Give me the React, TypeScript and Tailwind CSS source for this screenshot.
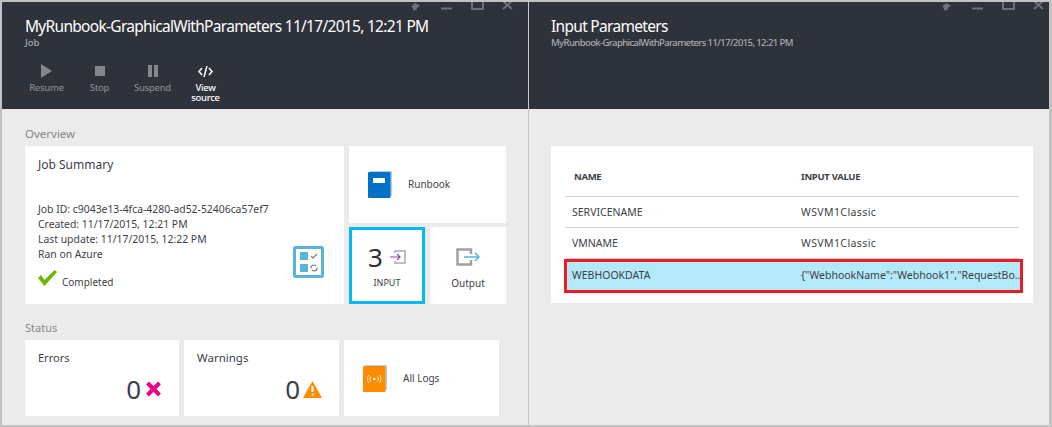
import React from 'react';

const font = { fontFamily: '"Noto Sans", "Open Sans", sans-serif' };

const WindowIcons = ({ className }: { className: string }) => (
  <svg className={className} width="110" height="12" viewBox="0 0 110 12" fill="none">
    <path d="M4 10L8 6.500 6.500 4 10 1l5 2.500-3 2.500-.5 2-3 .5-1-1.500-2.500 2z" fill="#6b6f76" />
    <path d="M36 6.500h11" stroke="#6b6f76" strokeWidth="2" />
    <path d="M67 -2h11v9h-11z" stroke="#6b6f76" strokeWidth="2" />
    <path d="M98 -1l9 8M107 -1l-9 8" stroke="#6b6f76" strokeWidth="2" />
  </svg>
);

const Command = ({ icon, label, active }: { icon: React.ReactNode; label: string; active?: boolean }) => (
  <div className={`w-[53px] flex flex-col items-center ${active ? 'text-white' : 'text-[#84878c]'}`}>
    <div className="h-[16px] flex items-center justify-center">{icon}</div>
    <div className="mt-[4px] max-w-[40px] text-[9.500px] leading-[10px] tracking-[-0.3px] font-medium text-center">{label}</div>
  </div>
);

const BookIcon = ({ color, children }: { color: string; children: React.ReactNode }) => (
  <svg width="25" height="27" viewBox="0 0 25 27">
    <path d="M2 0h22v25h-2z" fill="#a9c8e4" opacity="0.9" />
    <rect x="0" y="1" width="22.500" height="26" rx="1" fill={color} />
    {children}
  </svg>
);

const Tile = ({ className, children }: { className: string; children: React.ReactNode }) => (
  <div className={`bg-white ${className}`}>{children}</div>
);

const Row = ({ name, value }: { name: string; value: string }) => (
  <div className="h-[31px] flex items-center pt-[1px] border-b border-[#cfcfcf] text-[10.500px] text-[#3c3f47]">
    <div className="w-[235px] shrink-0 pl-[6px]">{name}</div>
    <div className="text-[10.500px] tracking-[0.4px]">{value}</div>
  </div>
);

export default function App() {
  return (
    <div className="w-[1052px] h-[427px] overflow-hidden flex bg-[#ebebeb] border-t-2 border-l-2 border-b-2 border-r-[3px] border-[#c2c2c2] text-[#3c3f47]" style={font}>
      {/* Left blade */}
      <div className="w-[527px] shrink-0 flex flex-col border-r border-[#c8c8c8]">
        <div className="relative h-[107px] bg-[#2e323b] pl-[23px] pt-[12px]">
          <WindowIcons className="absolute top-0 right-[13px]" />
          <div className="text-[15.500px] leading-[24px] tracking-[-0.7px] text-white whitespace-nowrap">MyRunbook-GraphicalWithParameters 11/17/2015, 12:21 PM</div>
          <div className="text-[9.500px] leading-[12px] -mt-[1px] font-medium text-[#a8abb0]">Job</div>
          <div className="flex -ml-[5px] mt-[14px]">
            <Command label="Resume" icon={<svg width="11" height="14" viewBox="0 0 11 14"><path d="M0 0l11 7-11 7z" fill="#84878c" /></svg>} />
            <Command label="Stop" icon={<svg width="10" height="10" viewBox="0 0 10 10"><rect width="10" height="10" fill="#84878c" /></svg>} />
            <Command label="Suspend" icon={<svg width="10" height="12" viewBox="0 0 10 12"><path d="M0 0h4v12H0zM6 0h4v12H6z" fill="#84878c" /></svg>} />
            <Command active label="View source" icon={<svg width="15" height="11" viewBox="0 0 15 11" fill="none" stroke="#fff" strokeWidth="1.500"><path d="M4 2L1 5.500 4 9M11 2l3 3.500L11 9M9 0L6 11" /></svg>} />
          </div>
        </div>

        <div className="flex-1 pl-[23px] pt-[17px]">
          <div className="text-[11.500px] leading-[16px] text-[#85888d]">Overview</div>
          <div className="flex gap-[5px] mt-[4px]">
            <Tile className="relative w-[319px] h-[158px] pl-[13px] pt-[10px]">
              <div className="text-[12px] leading-[17px]">Job Summary</div>
              <div className="mt-[29px] text-[10.400px] leading-[15px]">
                <div>Job ID: c9043e13-4fca-4280-ad52-52406ca57ef7</div>
                <div>Created: 11/17/2015, 12:21 PM</div>
                <div>Last update: 11/17/2015, 12:22 PM</div>
                <div>Ran on Azure</div>
              </div>
              <div className="flex items-end mt-[8px]">
                <svg className="mb-[3px]" width="19" height="16" viewBox="0 0 19 16"><path d="M0 8l3-3 3.500 5L16.500 0 19 2 6.500 16z" fill="#6bb700" /></svg>
                <span className="ml-[5px] text-[10px] leading-[14px]">Completed</span>
              </div>
              <svg className="absolute left-[268px] top-[100px]" width="31" height="32" viewBox="0 0 31 32">
                <rect x="1.500" y="1.500" width="28" height="29" rx="1" fill="#fff" stroke="#59b4d9" strokeWidth="3" />
                <rect x="7" y="6" width="8" height="8" fill="#59b4d9" />
                <rect x="7" y="18" width="8" height="8" fill="#59b4d9" />
                <path d="M18 10l2 2 4-4" fill="none" stroke="#7a7a7a" strokeWidth="1.200" />
                <circle cx="21" cy="22" r="3" fill="none" stroke="#7a7a7a" strokeWidth="1.200" strokeDasharray="7 2" />
              </svg>
            </Tile>
            <div className="flex flex-col gap-[4px]">
              <Tile className="w-[157px] h-[77px] flex items-center pl-[19px]">
                <BookIcon color="#0072c6"><rect x="5" y="7" width="12" height="5" fill="#fff" rx="0.500" /></BookIcon>
                <span className="ml-[15px] text-[10px]">Runbook</span>
              </Tile>
              <div className="flex gap-[5px]">
                <div className="w-[76px] h-[77px] bg-white border-[3px] border-[#00bcf2] flex flex-col items-center pt-[10px]">
                  <div className="flex items-center">
                    <span className="text-[26px] leading-[34px] text-[#2c2f36]">3</span>
                    <svg className="ml-[7px]" width="16" height="14" viewBox="0 0 16 14" fill="none">
                      <path d="M5 3V1h10v12H5v-2" stroke="#a8a8a8" strokeWidth="1.500" />
                      <path d="M0 7h10M7 4l3 3-3 3" stroke="#8a44a8" strokeWidth="1.200" />
                    </svg>
                  </div>
                  <div className="text-[9px] leading-[12px] mt-[3px]">INPUT</div>
                </div>
                <Tile className="w-[76px] h-[77px] flex flex-col items-center pt-[21px]">
                  <svg width="24" height="18" viewBox="0 0 24 18" fill="none">
                    <path d="M15 6V1.500H1.500v15H15V12" stroke="#a0a0a0" strokeWidth="2.500" />
                    <path d="M8 9h15M19 5l4 4-4 4" stroke="#59b4d9" strokeWidth="1.500" />
                  </svg>
                  <div className="text-[10px] leading-[14px] mt-[10px]">Output</div>
                </Tile>
              </div>
            </div>
          </div>

          <div className="text-[11px] leading-[16px] text-[#85888d] mt-[16px]">Status</div>
          <div className="flex gap-[5px] mt-[4px]">
            <Tile className="w-[154px] h-[76px] pl-[13px] pt-[9px] flex flex-col">
              <div className="text-[11px] leading-[18px]">Errors</div>
              <div className="flex items-center justify-end pr-[17px] mt-[5px]">
                <span className="text-[26px] leading-[34px]">0</span>
                <svg className="ml-[4px]" width="17" height="16" viewBox="0 0 17 16"><path d="M2.500 2l12 12M14.500 2l-12 12" stroke="#ec008c" strokeWidth="4" /></svg>
              </div>
            </Tile>
            <Tile className="w-[155px] h-[76px] pl-[13px] pt-[9px] flex flex-col">
              <div className="text-[11.500px] leading-[18px]">Warnings</div>
              <div className="flex items-center justify-end pr-[17px] mt-[5px]">
                <span className="text-[26px] leading-[34px]">0</span>
                <svg className="ml-[3px]" width="19" height="17" viewBox="0 0 19 17">
                  <path d="M9.500 0L19 17H0z" fill="#ff8c00" />
                  <path d="M8.500 5h2v6h-2zM8.500 12.500h2v2h-2z" fill="#fff" />
                </svg>
              </div>
            </Tile>
            <Tile className="w-[155px] h-[76px] flex items-center pl-[19px]">
              <BookIcon color="#ff8c00">
                <path d="M8 11.500a3.500 3.500 0 0 0 0 5M14.400 11.500a3.500 3.500 0 0 1 0 5M6 10a6 6 0 0 0 0 8M16.400 10a6 6 0 0 1 0 8" fill="none" stroke="#fff" strokeWidth="0.800" />
                <circle cx="11.200" cy="14" r="1.300" fill="#fff" />
              </BookIcon>
              <span className="ml-[15px] text-[10px]">All Logs</span>
            </Tile>
          </div>
        </div>
      </div>

      {/* Right blade */}
      <div className="flex-1 flex flex-col">
        <div className="relative h-[107px] bg-[#2e323b] pl-[22px] pt-[12px]">
          <WindowIcons className="absolute top-0 right-[3px]" />
          <div className="text-[15.500px] leading-[24px] tracking-[-0.7px] text-white">Input Parameters</div>
          <div className="text-[9.500px] leading-[12px] -mt-[1px] tracking-[-0.6px] font-medium text-[#a8abb0]">MyRunbook-GraphicalWithParameters 11/17/2015, 12:21 PM</div>
        </div>
        <div className="flex-1 pl-[22px] pt-[37px]">
          <div className="w-[482px] h-[157px] bg-white pl-[15px] pt-[21px]">
            <div className="w-[453px] h-[30px] flex items-start border-b border-[#cfcfcf] text-[9.500px] leading-[20px] tracking-[-0.3px] font-bold text-[#3c3f47]">
              <div className="w-[235px] shrink-0 pl-[8px]">NAME</div>
              <div>INPUT VALUE</div>
            </div>
            <div className="w-[453px]">
              <Row name="SERVICENAME" value="WSVM1Classic" />
              <Row name="VMNAME" value="WSVM1Classic" />
            </div>
            <div className="-ml-[2px] w-[459px] h-[34px] border-[3px] border-[#ed1c24]">
              <div className="h-full w-[453px] bg-[#b3e9f9] flex items-center pb-[1px] text-[10.500px] text-[#3c3f47]">
                <div className="w-[234px] shrink-0 pl-[5px]">WEBHOOKDATA</div>
                <div className="whitespace-nowrap">{'{"WebhookName":"Webhook1","RequestBo...'}</div>
              </div>
            </div>
          </div>
        </div>
      </div>
    </div>
  );
}
